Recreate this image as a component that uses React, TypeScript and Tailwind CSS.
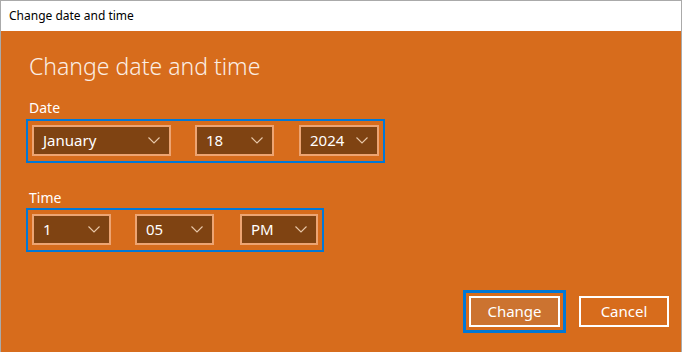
import React from "react";

const font = { fontFamily: '"Noto Sans", "Open Sans", sans-serif' };

function Chevron() {
  return (
    <svg width="12" height="7" viewBox="0 0 12 7" fill="none" className="shrink-0">
      <polyline points="0.5,0.5 6,6 11.5,0.5" stroke="#e9c9aa" strokeWidth="1.1" />
    </svg>
  );
}

function Combo({ value, width }: { value: string; width: string }) {
  return (
    <div
      className={`${width} h-[31px] flex items-center justify-between bg-[#7f4312] border-2 border-[#eda472] pl-[9px] pr-[9px] text-[15px] text-white`}
    >
      <span>{value}</span>
      <Chevron />
    </div>
  );
}

export default function App() {
  return (
    <div
      className="w-[682px] h-[352px] flex flex-col border-x border-t border-[#aaaaaa] overflow-hidden"
      style={font}
    >
      {/* title bar */}
      <div className="h-[30px] shrink-0 bg-white flex items-center pl-2 text-[12px] text-black">
        Change date and time
      </div>

      <div className="flex-1 flex flex-col bg-[#d76c1c] pl-[25px] pr-[12px] pb-[19px]">
        <h1 className="mt-[19px] ml-[3px] h-[32px] leading-[32px] text-[23px] font-light text-[#fbeee4]">
          Change date and time
        </h1>

        <p className="mt-[16px] ml-[3px] h-[20px] leading-[20px] text-[14px] text-white">Date</p>
        <div className="mt-[1px] self-start flex gap-[24px] border-2 border-[#0078d7] px-[4px] pt-[4px] pb-[5px]">
          <Combo value="January" width="w-[139px]" />
          <Combo value="18" width="w-[79px]" />
          <div className="ml-[1px]">
            <Combo value="2024" width="w-[80px]" />
          </div>
        </div>

        <p className="mt-[25px] ml-[3px] h-[20px] leading-[20px] text-[14px] text-white">Time</p>
        <div className="self-start flex gap-[24px] border-2 border-[#0078d7] px-[4px] pt-[4px] pb-[5px]">
          <Combo value="1" width="w-[79px]" />
          <Combo value="05" width="w-[79px]" />
          <div className="ml-[2px]">
            <Combo value="PM" width="w-[78px]" />
          </div>
        </div>

        <div className="flex-1" />

        <div className="flex justify-end items-center gap-[13px]">
          <div className="border-[3px] border-[#0078d7] p-[3px]">
            <button className="w-[91px] h-[31px] border-2 border-white bg-[#cc7330] text-[15px] text-white">
              Change
            </button>
          </div>
          <button className="w-[90px] h-[31px] border-2 border-white bg-[#d76c1c] text-[15px] text-white">
            Cancel
          </button>
        </div>
      </div>
    </div>
  );
}
